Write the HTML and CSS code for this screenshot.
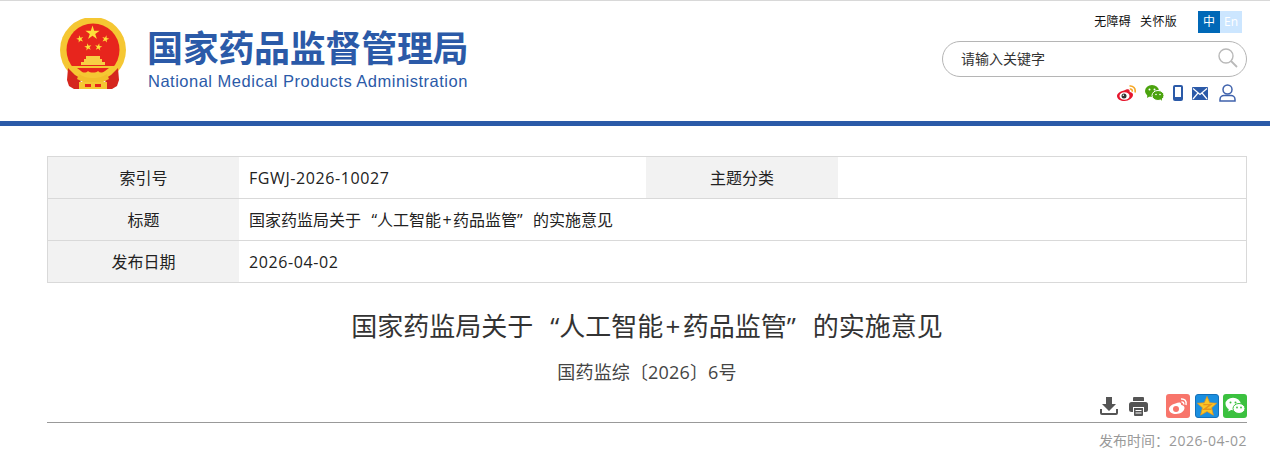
FILE: index.html
```html
<!DOCTYPE html>
<html lang="zh-CN">
<head>
<meta charset="UTF-8">
<title>国家药监局关于“人工智能+药品监管”的实施意见</title>
<link rel="stylesheet" href="styles.css">
</head>
<body>
<header class="header">
  <div class="logo">
    <svg class="emblem" width="66" height="72" viewBox="0 0 66 72">
      <defs>
        <polygon id="star" points="0,-1 .225,-.309 .951,-.309 .363,.118 .588,.809 0,.382 -.588,.809 -.363,.118 -.951,-.309 -.225,-.309"/>
      </defs>
      <circle cx="33" cy="32" r="33" fill="#f5c733"/>
      <circle cx="33" cy="32" r="26.500" fill="#e7251d"/>
      <g fill="#fde03a">
        <use href="#star" transform="translate(32.500 15) scale(7.500)"/>
        <use href="#star" transform="translate(20 21) rotate(-15) scale(3.800)"/>
        <use href="#star" transform="translate(45.500 21) rotate(15) scale(3.800)"/>
        <use href="#star" transform="translate(28 29) rotate(-10) scale(3.800)"/>
        <use href="#star" transform="translate(38.500 29) rotate(10) scale(3.800)"/>
      </g>
      <path fill="#f8ce44" d="M26 38h14v3h2v3h3v3H21v-3h3v-3h2z"/>
      <path fill="#f5c733" d="M8 48h50l-4 10-6 5H18l-6-5z"/>
      <path fill="#e7251d" d="M17 50h32l-4 3c-3 2-5 2-7 0-2 2-8 2-10 0-2 2-5 2-7 0z"/>
      <path fill="#d5261e" d="M8 50l7 7 5 3 1 6-2 5H14l-5-3-2-6zM58 50l-7 7-5 3-1 6 2 5h5l5-3 2-6z"/>
      <path fill="#f2be2b" d="M19 56c5 3 8 4 14 4s9-1 14-4l2 5-8 4H25l-8-4z"/>
      <path fill="#f5c733" d="M19 64h28v7H19z"/>
      <path fill="#e7251d" d="M25 66h6v3h-6zM35 66h6v3h-6z"/>
    </svg>
    <div class="logo-text">
      <div class="logo-cn">国家药品监督管理局</div>
      <div class="logo-en">National Medical Products Administration</div>
    </div>
  </div>
  <div class="tools">
    <div class="tools-top">
      <a class="tool-link">无障碍</a>
      <a class="tool-link">关怀版</a>
      <div class="lang">
        <span class="lang-cn">中</span><span class="lang-en">En</span>
      </div>
    </div>
    <div class="search">
      <span class="search-text">请输入关键字</span>
      <svg width="20" height="20" viewBox="0 0 20 20" fill="none" stroke="#b9b9b9" stroke-width="1.4">
        <circle cx="8" cy="8" r="7"/>
        <path d="M13 13l6 6" stroke-width="1.8"/>
      </svg>
    </div>
    <div class="tools-icons">
      <svg width="19" height="17" viewBox="0 0 19 17">
        <path fill="#e6162d" d="M7 5.500c3-1.700 5-1.700 5.500-.2.300 1 0 1.500.5 1.600 2 .5 3 1.400 3 2.900 0 3-4 6.200-8.500 6.200C3.500 16 0 14 0 11c0-2 2-4.400 7-5.500z"/>
        <ellipse cx="7.500" cy="11" rx="5" ry="3.800" fill="#fff"/>
        <circle cx="7" cy="11" r="2.500" fill="#333"/>
        <circle cx="6.300" cy="10.300" r=".7" fill="#fff"/>
        <path fill="none" stroke="#f5a623" stroke-width="1.600" d="M12.500 1c3.500-.5 6.500 2.500 5.500 6.500M12.800 4c1.700-.3 2.700 1 2.400 2.700"/>
      </svg>
      <svg width="19" height="16" viewBox="0 0 19 16">
        <ellipse cx="7" cy="6" rx="7" ry="6" fill="#4ba30e"/>
        <path fill="#4ba30e" d="M2.500 9l-.5 4 4-2.500z"/>
        <ellipse cx="13" cy="10.500" rx="6" ry="5" fill="#4ba30e" stroke="#fff"/>
        <path fill="#4ba30e" d="M15.500 14l1.500 2-.2-3z"/>
        <circle cx="4.500" cy="4.500" r="1" fill="#fff"/><circle cx="9.500" cy="4.500" r="1" fill="#fff"/>
        <circle cx="11" cy="9.500" r=".8" fill="#fff"/><circle cx="15" cy="9.500" r=".8" fill="#fff"/>
      </svg>
      <svg width="10" height="16" viewBox="0 0 10 16">
        <rect width="10" height="16" rx="2" fill="#2b5aa8"/>
        <rect x="2" y="2" width="6" height="10" fill="#fff"/>
      </svg>
      <svg width="16" height="13" viewBox="0 0 16 13">
        <rect width="16" height="13" rx="1" fill="#2b5aa8"/>
        <path d="M1 1.500l7 6 7-6M1 12l5-6M15 12l-5-6" fill="none" stroke="#fff" stroke-width="1.200"/>
      </svg>
      <svg class="icon-user" width="17" height="18" viewBox="0 0 17 18" fill="none" stroke="#3f62ac" stroke-width="1.500">
        <circle cx="8.500" cy="5.500" r="4.500"/>
        <path d="M1 17v-1.500c0-2.500 2-4 4-4h7c2 0 4 1.500 4 4V17z"/>
      </svg>
    </div>
  </div>
</header>
<div class="blue-bar"></div>

<main class="main">
  <div class="info-table">
    <div class="info-label">索引号</div>
    <div class="info-value info-num">FGWJ-2026-10027</div>
    <div class="info-label">主题分类</div>
    <div class="info-value"></div>
    <div class="info-label">标题</div>
    <div class="info-value info-wide info-title"><span>国家药监局关于<span class="q-open">“</span>人工智能<span class="plus">+</span>药品监管<span class="q-close">”</span>的实施意见</span></div>
    <div class="info-label">发布日期</div>
    <div class="info-value info-wide info-num">2026-04-02</div>
  </div>

  <h1 class="article-title">国家药监局关于<span class="q-open">“</span>人工智能<span class="plus">+</span>药品监管<span class="q-close">”</span>的实施意见</h1>
  <div class="article-no">国药监综〔2026〕6号</div>

  <div class="share">
    <svg class="share-tool" width="18" height="18" viewBox="0 0 18 18" fill="#555">
      <path d="M6 0h6v7h4l-7 7-7-7h4z"/>
      <path d="M0 12h2v4h14v-4h2v4a2 2 0 0 1-2 2H2a2 2 0 0 1-2-2z"/>
    </svg>
    <svg class="share-tool" width="19" height="19" viewBox="0 0 19 19" fill="#555">
      <path d="M5 0h9a1 1 0 0 1 1 1v3H4V1a1 1 0 0 1 1-1z"/>
      <rect y="5" width="19" height="10" rx="2.500"/>
      <rect x="4" y="10" width="11" height="9" fill="#fff"/>
      <path d="M5 11h9v7a1 1 0 0 1-1 1H6a1 1 0 0 1-1-1z"/>
      <path d="M6.500 13h6v1h-6zM6.500 15.500h6v1h-6z" fill="#fff"/>
    </svg>
    <div class="share-icons">
      <svg class="share-btn share-weibo" width="24" height="24" viewBox="0 0 24 24">
        <path fill="#fff" d="M9.500 9.500c3-1.500 5-1.500 5.500 0 .3 1 0 1.500.5 1.600 2 .5 3 1.400 3 2.900 0 3-4 6-8.500 6-3.800 0-7-2-7-5 0-2 2-4.400 6.500-5.500z"/>
        <circle cx="10" cy="15" r="3" fill="#f8756b"/>
        <path fill="none" stroke="#fff" stroke-width="1.500" d="M15 5c3.500-.5 6 2 5 6M15.500 8c1.500-.3 2.500 1 2.200 2.500"/>
      </svg>
      <svg class="share-btn share-qzone" width="24" height="24" viewBox="0 0 24 24">
        <polygon fill="#fbc525" stroke="#e8941a" stroke-width=".8" points="12,1.500 15,8.500 22.500,9 17,14 19,22 12,18 5,22 7,14 1.500,9 9,8.500"/>
        <path fill="none" stroke="#e8941a" stroke-width="1.600" d="M8 10.500h8l-7 5h8"/>
      </svg>
      <svg class="share-btn share-wechat" width="24" height="24" viewBox="0 0 24 24">
        <ellipse cx="10" cy="10" rx="7.500" ry="6.200" fill="#fff"/>
        <path fill="#fff" d="M6 14l-.8 3.500 4-2z"/>
        <ellipse cx="16" cy="14.500" rx="6" ry="5" fill="#fff" stroke="#3bc13f"/>
        <circle cx="7.500" cy="8.500" r="1" fill="#3bc13f"/><circle cx="12.500" cy="8.500" r="1" fill="#3bc13f"/>
        <circle cx="14" cy="13.500" r=".9" fill="#3bc13f"/><circle cx="18" cy="13.500" r=".9" fill="#3bc13f"/>
      </svg>
    </div>
  </div>
  <div class="publish-time">发布时间：<span class="publish-date">2026-04-02</span></div>
</main>
</body>
</html>
```
FILE: styles.css
```css
* {
  box-sizing: border-box;
}

body {
  margin: 0;
  background-color: #fff;
  color: #333;
  font-family: "Open Sans", "Noto Sans CJK SC", sans-serif;
  overflow: hidden;
}

.header {
  height: 121px;
  border-top: 1px solid #d8d8d8;
  padding: 0 23px 0 60px;
  display: flex;
  justify-content: space-between;
}

.logo {
  display: flex;
  align-items: flex-start;
  padding-top: 17px;
}

.emblem {
  flex-shrink: 0;
}

.logo-text {
  margin-left: 22px;
  padding-top: 5px;
  width: 322px;
}

.logo-cn {
  color: #2b5aa8;
  font-family: "Noto Sans CJK SC", sans-serif;
  font-size: 36px;
  font-weight: 700;
  line-height: 46px;
  letter-spacing: -0.3px;
  margin-left: -1px;
  white-space: nowrap;
}

.logo-en {
  color: #2b5aa8;
  font-family: "Liberation Sans", sans-serif;
  font-size: 16.5px;
  line-height: 20px;
  letter-spacing: 0.5px;
  margin-top: 2px;
  white-space: nowrap;
}

.tools {
  width: 305px;
  display: flex;
  flex-direction: column;
}

.tools-top {
  display: flex;
  align-items: center;
  justify-content: flex-end;
  height: 22px;
  margin-top: 10px;
  padding-right: 5px;
}

.tool-link {
  color: #111;
  font-size: 12px;
  letter-spacing: 0.3px;
  margin-right: 9px;
  padding-bottom: 2px;
}

.lang {
  display: flex;
  margin-left: 12px;
  font-size: 12px;
  line-height: 22px;
  text-align: center;
}

.lang-cn {
  width: 22px;
  background-color: #0068b7;
  color: #fff;
}

.lang-en {
  width: 22px;
  background-color: #cce6ff;
  color: #fff;
}

.search {
  height: 36px;
  margin-top: 8px;
  border: 1px solid #b5b5b5;
  border-radius: 18px;
  padding: 0 8px 2px 18px;
  display: flex;
  align-items: center;
  justify-content: space-between;
}

.search-text {
  color: #333;
  font-size: 14px;
}

.tools-icons {
  display: flex;
  align-items: center;
  justify-content: flex-end;
  gap: 9px;
  margin-top: 7px;
  padding-right: 11px;
}

.icon-user {
  margin-left: 2px;
}

.blue-bar {
  height: 5px;
  background-color: #2b5aa8;
}

.main {
  width: 1200px;
  margin-left: 47px;
  padding-top: 30px;
}

.info-table {
  display: grid;
  grid-template-columns: 191px 407px 192px 1fr;
  grid-auto-rows: 42px;
  border: 1px solid #d9d9d9;
  border-bottom: 0;
  font-size: 16px;
  color: #222;
}

.info-label,
.info-value {
  display: flex;
  align-items: center;
  border-bottom: 1px solid #d9d9d9;
}

.info-label {
  justify-content: center;
  background-color: #f2f2f2;
  padding-bottom: 2px;
}

.info-value {
  padding-left: 10px;
}

.info-wide {
  grid-column: span 3;
}

.info-title {
  padding-bottom: 2px;
}

.info-num {
  letter-spacing: 0.6px;
}

/* quotes take a full cell here, as in the original font */
.q-open,
.q-close {
  display: inline-block;
  width: 1em;
}

.q-open {
  text-align: right;
}

.q-close {
  text-align: left;
}

.plus {
  padding: 0 0.09em;
}

.article-title {
  margin: 25px 0 0;
  font-size: 26px;
  font-weight: 400;
  line-height: 36px;
  text-align: center;
  color: #333;
}

.article-no {
  margin-top: 15px;
  font-size: 18px;
  line-height: 26px;
  letter-spacing: 0.15px;
  text-align: center;
  color: #444;
}

.share {
  display: flex;
  align-items: flex-start;
  justify-content: flex-end;
  height: 28px;
  margin-top: 9px;
}

.share-tool {
  margin-top: 3px;
  margin-right: 11px;
}

.share-icons {
  display: flex;
  gap: 4.5px;
  margin-left: 7px;
}

.share-btn {
  border-radius: 3px;
}

.share-weibo {
  background-color: #f8756b;
}

.share-qzone {
  background-color: #1a8fe0;
  border: 1px solid #1470b8;
}

.share-wechat {
  background-color: #3bc13f;
}

.publish-time {
  border-top: 1px solid #999;
  padding-top: 9px;
  font-size: 14px;
  line-height: 18px;
  text-align: right;
  color: #999;
}

.publish-date {
  letter-spacing: 0.5px;
}
```
